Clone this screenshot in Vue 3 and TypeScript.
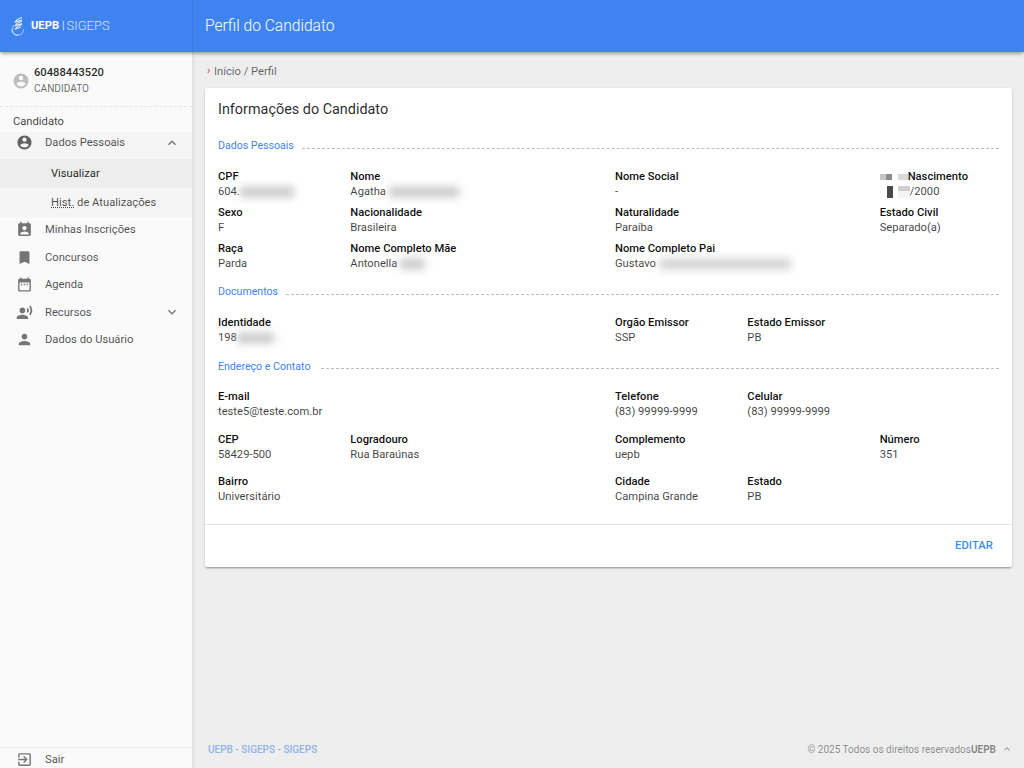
<template>
  <div class="app">
    <header class="topbar">
      <div class="brand">
        <svg class="brand__logo" viewBox="0 0 13 19" fill="none" stroke="#dbe8ff">
          <path d="M11 .5 C7 2 5 3 4.5 5 L11 3 M11 4 C7 5.5 5 6.5 4.5 8.5 L11 6.5 M11 7.5 C7 9 5 10 4.5 12 L10 10" stroke-width="1.3" />
          <path d="M3.2 8 C.5 12 1 17 6 18 C10 18.5 12.5 15.5 12.5 12.5 M.5 12.5 C1 16 3.5 18.5 7 18.5" stroke-width=".8" />
        </svg>
        <span class="brand__strong">UEPB</span>
        <span class="brand__sep">|</span>
        <span class="brand__light">SIGEPS</span>
      </div>
      <h1 class="topbar__title">Perfil do Candidato</h1>
    </header>

    <div class="body">
      <aside class="sidebar">
        <div class="user">
          <svg class="user__avatar" viewBox="0 0 24 24"><path :d="icons.accountCircle" /></svg>
          <div>
            <div class="user__id">60488443520</div>
            <div class="user__role">CANDIDATO</div>
          </div>
        </div>
        <div class="sidebar__heading">Candidato</div>

        <div class="group">
          <div class="nav-item nav-item--group">
            <svg class="nav-item__icon nav-item__icon--dark" viewBox="0 0 24 24"><path :d="icons.accountCircle" /></svg>
            <span class="nav-item__label">Dados Pessoais</span>
            <svg class="nav-item__chevron" viewBox="0 0 24 24"><path :d="icons.chevronUp" /></svg>
          </div>
          <div class="sub-item sub-item--active">Visualizar</div>
          <div class="sub-item"><abbr class="sub-item__abbr">Hist.</abbr> de Atualizações</div>
        </div>

        <div v-for="item in navItems" :key="item.label" class="nav-item">
          <svg class="nav-item__icon" viewBox="0 0 24 24"><path :d="item.icon" /></svg>
          <span class="nav-item__label">{{ item.label }}</span>
          <svg v-if="item.chevron" class="nav-item__chevron" viewBox="0 0 24 24"><path :d="icons.chevronDown" /></svg>
        </div>

        <div class="nav-item nav-item--exit">
          <svg class="nav-item__icon" viewBox="0 0 24 24"><path :d="icons.exit" /></svg>
          <span class="nav-item__label">Sair</span>
        </div>
      </aside>

      <main class="main">
        <div class="crumbs"><span class="crumbs__mark">›</span>Início / Perfil</div>

        <section class="card">
          <h2 class="card__title">Informações do Candidato</h2>

          <div class="legend legend--first"><span>Dados Pessoais</span><i></i></div>
          <div class="rows">
            <div class="row">
              <div class="field">
                <b>CPF</b>
                <p>604.<span class="blur" style="width: 54px"></span></p>
              </div>
              <div class="field span2">
                <b>Nome</b>
                <p>Agatha <span class="blur" style="width: 70px"></span></p>
              </div>
              <div class="field">
                <b>Nome Social</b>
                <p>-</p>
              </div>
              <div class="field field--skip">
                <b class="masked">
                  <span class="pix pix--a"></span><span class="pix pix--b"></span><span class="pix pix--c"></span><span>Nascimento</span>
                </b>
                <p class="masked">
                  <span class="pix pix--d"></span><span class="pix pix--e"></span>/2000
                </p>
              </div>
            </div>
            <div class="row">
              <div class="field"><b>Sexo</b><p>F</p></div>
              <div class="field span2"><b>Nacionalidade</b><p>Brasileira</p></div>
              <div class="field"><b>Naturalidade</b><p>Paraíba</p></div>
              <div class="field field--skip"><b>Estado Civil</b><p>Separado(a)</p></div>
            </div>
            <div class="row">
              <div class="field"><b>Raça</b><p>Parda</p></div>
              <div class="field span2">
                <b>Nome Completo Mãe</b>
                <p>Antonella <span class="blur" style="width: 25px"></span></p>
              </div>
              <div class="field span2">
                <b>Nome Completo Pai</b>
                <p>Gustavo <span class="blur blur--light" style="width: 132px"></span></p>
              </div>
            </div>
          </div>

          <div class="legend legend--docs"><span>Documentos</span><i></i></div>
          <div class="rows">
            <div class="row">
              <div class="field span3">
                <b>Identidade</b>
                <p>198<span class="blur" style="width: 37px"></span></p>
              </div>
              <div class="field"><b>Orgão Emissor</b><p>SSP</p></div>
              <div class="field"><b>Estado Emissor</b><p>PB</p></div>
            </div>
          </div>

          <div class="legend legend--address"><span>Endereço e Contato</span><i></i></div>
          <div class="rows rows--wide">
            <div class="row">
              <div class="field span3"><b>E-mail</b><p>teste5@teste.com.br</p></div>
              <div class="field"><b>Telefone</b><p>(83) 99999-9999</p></div>
              <div class="field"><b>Celular</b><p>(83) 99999-9999</p></div>
            </div>
            <div class="row">
              <div class="field"><b>CEP</b><p>58429-500</p></div>
              <div class="field span2"><b>Logradouro</b><p>Rua Baraúnas</p></div>
              <div class="field"><b>Complemento</b><p>uepb</p></div>
              <div class="field field--skip"><b>Número</b><p>351</p></div>
            </div>
            <div class="row">
              <div class="field span3"><b>Bairro</b><p>Universitário</p></div>
              <div class="field"><b>Cidade</b><p>Campina Grande</p></div>
              <div class="field"><b>Estado</b><p>PB</p></div>
            </div>
          </div>

          <footer class="card__actions">
            <button class="btn-text" type="button">EDITAR</button>
          </footer>
        </section>

        <footer class="footer">
          <span class="footer__left">UEPB - SIGEPS - SIGEPS</span>
          <span class="footer__right">© 2025 Todos os direitos reservados<b>UEPB</b></span>
          <svg class="footer__up" viewBox="0 0 24 24"><path :d="icons.chevronUp" /></svg>
        </footer>
      </main>
    </div>
  </div>
</template>

<script setup lang="ts">
const icons = {
  accountCircle:
    "M12,19.2C9.5,19.2 7.29,17.92 6,16C6.03,14 10,12.9 12,12.9C14,12.9 17.97,14 18,16C16.71,17.92 14.5,19.2 12,19.2M12,5A3,3 0 0,1 15,8A3,3 0 0,1 12,11A3,3 0 0,1 9,8A3,3 0 0,1 12,5M12,2A10,10 0 0,0 2,12A10,10 0 0,0 12,22A10,10 0 0,0 22,12C22,6.47 17.5,2 12,2Z",
  chevronUp: "M7.41 15.41L12 10.83l4.59 4.58L18 14l-6-6-6 6z",
  chevronDown: "M7.41 8.59L12 13.17l4.59-4.58L18 10l-6 6-6-6z",
  exit: "M10.09 15.59L11.5 17l5-5-5-5-1.41 1.41L12.67 11H3v2h9.67l-2.58 2.59zM19 3H5c-1.11 0-2 .9-2 2v4h2V5h14v14H5v-4H3v4c0 1.1.89 2 2 2h14c1.1 0 2-.9 2-2V5c0-1.1-.9-2-2-2z",
};

const navItems = [
  {
    label: "Minhas Inscrições",
    icon: "M19 3H18V1H16V3H8V1H6V3H5C3.9 3 3 3.9 3 5V19C3 20.1 3.9 21 5 21H19C20.1 21 21 20.1 21 19V5C21 3.9 20.1 3 19 3M12 7C13.66 7 15 8.34 15 10C15 11.66 13.66 13 12 13C10.34 13 9 11.66 9 10C9 8.34 10.34 7 12 7M18 19H6V18C6 16 10 14.9 12 14.9C14 14.9 18 16 18 18V19Z",
  },
  {
    label: "Concursos",
    icon: "M17,3H7A2,2 0 0,0 5,5V21L12,18L19,21V5C19,3.89 18.1,3 17,3Z",
  },
  {
    label: "Agenda",
    icon: "M9 11H7v2h2v-2zm4 0h-2v2h2v-2zm4 0h-2v2h2v-2zm2-7h-1V2h-2v2H8V2H6v2H5c-1.11 0-1.99.9-1.99 2L3 20c0 1.1.89 2 2 2h14c1.1 0 2-.9 2-2V6c0-1.1-.9-2-2-2zm0 16H5V9h14v11z",
  },
  {
    label: "Recursos",
    chevron: true,
    icon: "M9 5a4 4 0 1 0 0 8a4 4 0 1 0 0-8zM9 15c-2.67 0-8 1.34-8 4v2h16v-2c0-2.66-5.33-4-8-4zm7.76-9.64l-1.68 1.69c.84 1.18.84 2.71 0 3.89l1.68 1.69c2.02-2.02 2.02-5.07 0-7.27zM20.07 2l-1.63 1.63c2.77 3.02 2.77 7.56 0 10.74L20.07 16c3.9-3.89 3.91-9.95 0-14z",
  },
  {
    label: "Dados do Usuário",
    icon: "M12 12c2.21 0 4-1.79 4-4s-1.79-4-4-4-4 1.79-4 4 1.79 4 4 4zm0 2c-2.67 0-8 1.34-8 4v2h16v-2c0-2.66-5.33-4-8-4z",
  },
];
</script>

<style>
html,
body {
  margin: 0;
  background: #eeeeee;
}
</style>

<style scoped>
.app {
  height: 768px;
  overflow: hidden;
  display: flex;
  flex-direction: column;
  font-family: Roboto, "Noto Sans", sans-serif;
  font-size: 11.2px;
  color: rgba(0, 0, 0, 0.87);
  background: #eeeeee;
}

.topbar {
  flex: 0 0 52px;
  display: flex;
  align-items: center;
  background: #3f83f1;
  box-shadow: 0 2px 4px -1px rgba(0, 0, 0, 0.3), 0 1px 4px rgba(0, 0, 0, 0.2);
  position: relative;
  z-index: 2;
}

.brand {
  width: 193px;
  height: 100%;
  flex: none;
  display: flex;
  align-items: center;
  box-sizing: border-box;
  padding: 0 0 2px 11px;
  border-right: 1px solid #3a7ae0;
  color: #fff;
}

.brand__logo {
  width: 13px;
  height: 19px;
  margin: 3px 7px 0 0;
}

.brand__strong {
  font-size: 11.2px;
  font-weight: 700;
}

.brand__sep {
  margin: 0 2px 0 3px;
  font-weight: 300;
}

.brand__light {
  font-weight: 300;
  font-size: 13px;
  color: #d6e4fc;
}

.topbar__title {
  margin: 0 0 0 12px;
  font-size: 15.6px;
  font-weight: 300;
  color: #fff;
  padding-bottom: 1px;
}

.body {
  flex: 1;
  min-height: 0;
  display: flex;
}

.sidebar {
  width: 193px;
  flex: none;
  box-sizing: border-box;
  display: flex;
  flex-direction: column;
  background: #fafafa;
  border-right: 1px solid #e2e2e2;
  box-shadow: 1px 0 2px rgba(0, 0, 0, 0.08);
}

.user {
  height: 55px;
  flex: none;
  box-sizing: border-box;
  display: flex;
  align-items: center;
  gap: 4px;
  padding: 3px 0 0 12px;
  border-bottom: 1px dashed #e6e6e6;
}

.user__avatar {
  width: 18px;
  height: 18px;
  fill: #bdbdbd;
}

.user__id {
  font-weight: 500;
  line-height: 16px;
  color: rgba(0, 0, 0, 0.85);
}

.user__role {
  font-size: 10.1px;
  line-height: 15px;
  color: rgba(0, 0, 0, 0.6);
}

.sidebar__heading {
  flex: none;
  padding: 7px 0 0 13px;
  height: 18px;
  line-height: 16px;
  color: rgba(0, 0, 0, 0.75);
}

.group {
  background: #f5f5f5;
  flex: none;
  margin-bottom: -1px;
}

.nav-item {
  flex: none;
  height: 27.5px;
  display: flex;
  align-items: center;
  padding: 0 12px 0 16px;
  color: rgba(0, 0, 0, 0.7);
}

.nav-item--group {
  height: 27px;
  padding-bottom: 6px;
  box-sizing: border-box;
}

.nav-item__icon {
  width: 17px;
  height: 17px;
  fill: #757575;
}

.nav-item__icon--dark {
  fill: #616161;
}

.nav-item__label {
  margin-left: 12px;
  flex: 1;
}

.nav-item__chevron {
  width: 16px;
  height: 16px;
  fill: #757575;
}

.nav-item--exit {
  margin-top: auto;
  height: 18px;
  padding-top: 2px;
  border-top: 1px solid #ececec;
}

.sub-item {
  height: 29px;
  display: flex;
  align-items: center;
  gap: 3px;
  padding-left: 51px;
  color: rgba(0, 0, 0, 0.7);
}

.sub-item--active {
  background: #eeeeee;
  color: rgba(0, 0, 0, 0.87);
}

.sub-item__abbr {
  text-decoration: underline dotted;
}

.main {
  flex: 1;
  min-width: 0;
  display: flex;
  flex-direction: column;
  padding: 0 12px 0 12px;
}

.crumbs {
  height: 36px;
  padding-top: 2px;
  box-sizing: border-box;
  flex: none;
  display: flex;
  align-items: center;
  color: rgba(0, 0, 0, 0.6);
}

.crumbs__mark {
  width: 7px;
  margin-left: 2px;
  margin-top: -2px;
  color: #e53935;
}

.card {
  flex: none;
  height: 479px;
  display: flex;
  flex-direction: column;
  box-sizing: border-box;
  padding-left: 13px;
  background: #fff;
  border-radius: 2px;
  box-shadow: 0 2px 2px -1px rgba(0, 0, 0, 0.3), 0 1px 3px rgba(0, 0, 0, 0.15);
}

.card__title {
  margin: 0;
  padding-top: 12px;
  font-size: 14.4px;
  line-height: 20px;
  font-weight: 400;
  color: rgba(0, 0, 0, 0.85);
}

.legend {
  display: flex;
  align-items: center;
  gap: 8px;
  padding-right: 13px;
  font-size: 10.6px;
  line-height: 14px;
  color: #3f83f1;
}

.legend i {
  flex: 1;
  margin-top: 5px;
  border-top: 1px dashed #bdbdbd;
}

.legend--first {
  margin-top: 19px;
  margin-bottom: 16px;
}

.legend--docs {
  margin-top: 14px;
  margin-bottom: 16px;
}

.legend--address {
  margin-top: 15px;
  margin-bottom: 15px;
  gap: 11px;
}

.legend--address i {
  margin-top: 3px;
}

.rows {
  display: grid;
  row-gap: 6px;
}

.rows--wide {
  row-gap: 12.5px;
}

.row {
  display: grid;
  grid-template-columns: repeat(6, 1fr);
}

.field {
  line-height: 15px;
  height: 30px;
}

.span2 {
  grid-column: span 2;
}

.span3 {
  grid-column: span 3;
}

.field--skip {
  grid-column-start: 6;
}

.field b {
  display: block;
  font-weight: 500;
  color: rgba(0, 0, 0, 0.95);
}

.field p {
  margin: 0;
  display: flex;
  align-items: center;
  white-space: pre-wrap;
  color: rgba(0, 0, 0, 0.75);
}

.blur {
  display: inline-block;
  height: 10px;
  background: #c6c6c6;
  filter: blur(4px);
}

.blur--light {
  background: #d0d0d0;
}

.field b.masked {
  display: flex;
  align-items: center;
  height: 15px;
}

.pix {
  display: inline-block;
  flex: none;
}

.pix--a {
  width: 12px;
  height: 6px;
  background: linear-gradient(90deg, #c6c6c6 50%, #8c8c8c 50%);
}

.pix--b {
  width: 6px;
  height: 6px;
  background: #fff;
}

.pix--c {
  width: 10px;
  height: 6px;
  background: #d9d9d9;
}

.field p.masked {
  height: 15px;
  padding-left: 7px;
}

.pix--d {
  width: 6px;
  height: 12px;
  margin-right: 5px;
  background: #4a4a4a;
}

.pix--e {
  width: 12px;
  height: 12px;
  background: linear-gradient(180deg, #cfcfcf 45%, #f4f4f4 45%);
}

.card__actions {
  margin-top: auto;
  height: 40px;
  margin-left: -13px;
  display: flex;
  align-items: center;
  justify-content: flex-end;
  padding: 0 19px 2px 0;
  border-top: 1px solid #e6e6e6;
}

.btn-text {
  padding: 0;
  border: 0;
  background: none;
  font-family: inherit;
  font-size: 11.2px;
  font-weight: 500;
  letter-spacing: 0.1px;
  color: #3b8fe8;
  cursor: pointer;
}

.footer {
  margin-top: auto;
  height: 37px;
  flex: none;
  display: flex;
  align-items: center;
  padding: 0 3px;
  font-size: 10px;
  color: rgba(0, 0, 0, 0.45);
}

.footer__left {
  font-weight: 500;
  color: #8fb3ea;
}

.footer__right {
  margin-left: auto;
}

.footer__right b {
  font-weight: 700;
}

.footer__up {
  width: 12px;
  height: 12px;
  margin: 0 -4px 2px 5px;
  fill: #9e9e9e;
}
</style>
